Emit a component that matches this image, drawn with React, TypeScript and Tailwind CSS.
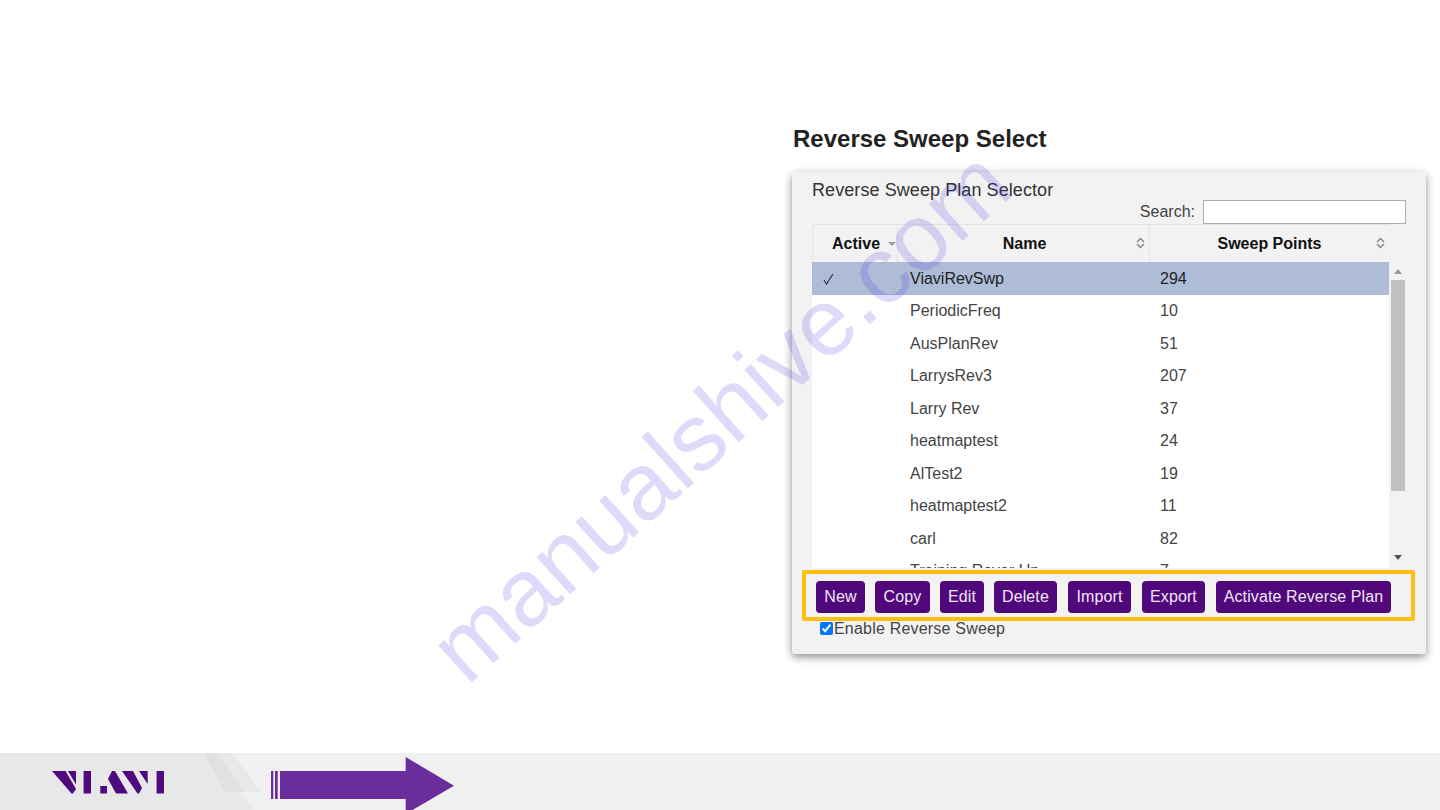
const plans = [
  { name: 'ViaviRevSwp', points: '294', active: true },
  { name: 'PeriodicFreq', points: '10' },
  { name: 'AusPlanRev', points: '51' },
  { name: 'LarrysRev3', points: '207' },
  { name: 'Larry Rev', points: '37' },
  { name: 'heatmaptest', points: '24' },
  { name: 'AlTest2', points: '19' },
  { name: 'heatmaptest2', points: '11' },
  { name: 'carl', points: '82' },
  { name: 'Training Rever Up', points: '7' }
]

const actions = [
  { label: 'New', className: 'w-[49px]' },
  { label: 'Copy', className: 'w-[55px]' },
  { label: 'Edit', className: 'w-[44px]' },
  { label: 'Delete', className: 'w-[63px]' },
  { label: 'Import', className: 'ml-px w-[63px]' },
  { label: 'Export', className: 'ml-px w-[63px]' },
  { label: 'Activate Reverse Plan', className: 'ml-px w-[175px]' }
]

function SortIcon() {
  return (
    <svg width="9" height="12" viewBox="0 0 9 12" fill="none" stroke="#8a8a8a" strokeWidth="1.5">
      <path d="M1 5L4.5 1.5L8 5" />
      <path d="M1 7L4.5 10.5L8 7" />
    </svg>
  )
}

function ViaviLogo() {
  return (
    <svg width="112" height="23" viewBox="0 0 112 23" className="block" fill="#4f0a7d">
      <polygon points="0,0 13.5,0 24,18 21,22.5 19.5,22.5" />
      <polygon points="16,0 24,0 24,13.5" />
      <rect x="31.6" y="0" width="7.4" height="22.5" />
      <rect x="48.3" y="15" width="6.7" height="7.5" />
      <polygon points="60,0 63,0 76,22.5 64,22.5 56,8" />
      <polygon points="70,0 81,0 90,17 87,22.5 85.5,22.5" />
      <polygon points="87,0 95.7,0 95.7,13" />
      <rect x="104.6" y="0" width="7.4" height="22.5" />
    </svg>
  )
}

export default function App() {
  return (
    <div className="relative flex h-[810px] w-[1440px] flex-col overflow-hidden bg-white font-['Liberation_Sans',Arial,sans-serif]">
      <main className="flex h-[753px] justify-end pr-[14px] pt-[124px]">
        <div className="w-[634px]">
          <h1 className="pl-px text-[24px] leading-[30px] font-bold text-[#222]">Reverse Sweep Select</h1>

          <section className="mt-[18px] h-[482px] rounded-[3px] bg-[#f2f2f2] px-[10px] pt-[8px] shadow-[0_3px_8px_rgba(0,0,0,0.45)]">
            <div className="pl-[10px] text-[18px] leading-[20px] tracking-[0.08px] text-[#333]">Reverse Sweep Plan Selector</div>

            <div className="flex h-[24px] items-center justify-end pr-[10px]">
              <label className="mr-2 text-[16px] text-[#444]">Search:</label>
              <input className="h-[24px] w-[203px] border border-[#aaa] bg-white" />
            </div>

            <div className="mx-[10px]">
              <div className="grid h-[38px] w-[577px] grid-cols-[86px_252px_239px] border-t border-[#e4e4e4] text-[16px] font-bold text-[#111]">
                <div className="flex items-center gap-[8px] border-x border-[#e4e4e4] pl-[19px]">
                  Active
                  <span className="mt-px h-0 w-0 border-x-[4px] border-t-[4px] border-x-transparent border-t-[#999]" />
                </div>
                <div className="relative flex items-center justify-center border-r border-[#e4e4e4] pl-[2px]">
                  Name
                  <span className="absolute right-[4px] top-[12px]"><SortIcon /></span>
                </div>
                <div className="relative flex items-center justify-center">
                  Sweep Points
                  <span className="absolute right-[4px] top-[12px]"><SortIcon /></span>
                </div>
              </div>

              <div className="flex h-[306px] overflow-hidden">
                <div className="w-[577px] bg-white">
                  {plans.map((plan) => (
                    <div
                      key={plan.name}
                      className={`grid h-[32.5px] grid-cols-[98px_250px_1fr] items-center pt-px text-[16px] ${plan.active ? 'bg-[#aebcd8] text-[#222]' : 'text-[#444]'}`}
                    >
                      <span className="pl-[11px]">
                        {plan.active && (
                          <svg width="11" height="12" viewBox="0 0 11 12" fill="none" stroke="#333" strokeWidth="1.2" className="block">
                            <path d="M1 7L3.5 11L10 1" />
                          </svg>
                        )}
                      </span>
                      <span>{plan.name}</span>
                      <span>{plan.points}</span>
                    </div>
                  ))}
                </div>
                <div className="flex w-[17px] flex-col items-center pl-px">
                  <div className="flex h-[18px] w-full items-center justify-center">
                    <span className="h-0 w-0 border-x-[4px] border-b-[5px] border-x-transparent border-b-[#999]" />
                  </div>
                  <div className="h-[211px] w-[14px] bg-[#c1c1c1]" />
                  <div className="mt-[64px] flex w-full justify-center">
                    <span className="h-0 w-0 border-x-[4px] border-t-[5px] border-x-transparent border-t-[#555]" />
                  </div>
                </div>
              </div>
            </div>

            <div className="mt-[2px] flex h-[51px] w-[613px] items-start gap-[10px] rounded-[2px] border-[4px] border-[#fdc010] pl-[10px] pt-[7px]">
              {actions.map((action) => (
                <button key={action.label} className={`h-[32px] rounded-[4px] bg-[#50077a] text-center text-[16px] tracking-[0.1px] text-[#f2e8f8] ${action.className}`}>
                  {action.label}
                </button>
              ))}
            </div>

            <label className="ml-[18px] mt-px flex h-[14px] items-center text-[16px] tracking-[0.2px] text-[#444]">
              <input type="checkbox" defaultChecked className="m-0 -mt-[2px] mr-px h-[13px] w-[13px]" />
              Enable Reverse Sweep
            </label>
          </section>
        </div>
      </main>

      <footer className="relative flex h-[57px] items-start overflow-hidden bg-[#f0f0f0]">
        <svg width="270" height="57" viewBox="0 0 270 57" className="absolute left-0 top-0">
          <polygon points="0,0 232,0 261,39 240,39 253,57 0,57" fill="#e8e8e8" />
          <polygon points="204,0 217,0 245,39 225,39" fill="#e1e1e1" />
        </svg>
        <div className="relative ml-[52px] mt-[18px]">
          <ViaviLogo />
        </div>
        <svg width="183" height="57" viewBox="0 0 183 57" className="relative ml-[107px] mt-[4px]" fill="#6c2d9c">
          <rect x="0" y="14" width="2.3" height="28" />
          <rect x="4" y="14" width="2.7" height="28" />
          <rect x="9" y="14" width="126" height="28" />
          <polygon points="134.7,0 183,28.7 134.7,57" />
        </svg>
      </footer>

      <div className="pointer-events-none absolute left-[350px] top-[368px] w-[740px] -rotate-[42deg] whitespace-nowrap text-center text-[95px] leading-none text-[#3c2ee0] opacity-[0.17]">
        manualshive.com
      </div>
    </div>
  )
}
